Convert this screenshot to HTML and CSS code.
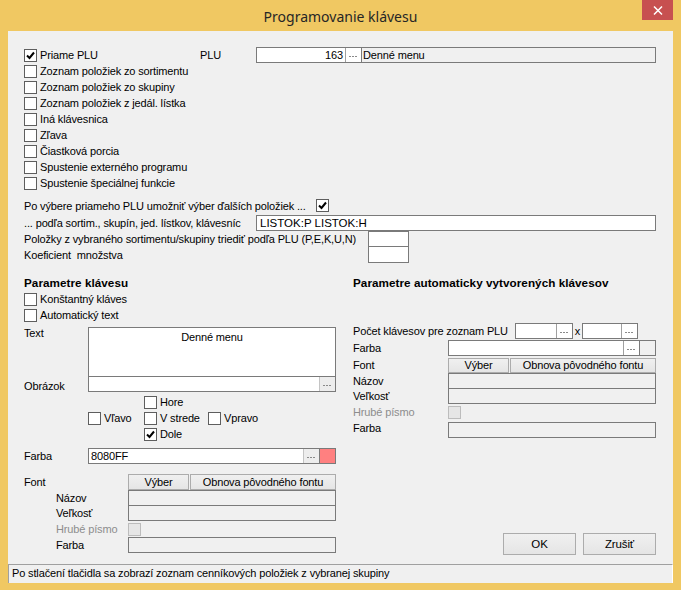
FILE: index.html
```html
<!DOCTYPE html>
<html lang="sk">
<head>
<meta charset="utf-8">
<title>Programovanie klávesu</title>
<link rel="stylesheet" href="styles.css">
</head>
<body>
<div class="window">
  <div class="titlebar">
    <span></span>
    <span class="title">Programovanie klávesu</span>
    <span class="close"><svg width="10" height="9" viewBox="0 0 10 9"><path d="M1 0.5 L9 8.5 M9 0.5 L1 8.5" stroke="#fff" stroke-width="1.5" fill="none"/></svg></span>
  </div>
  <div class="client">
    <div class="content">
      <section class="top">
        <div class="row">
          <label class="chk c-plu"><span class="cb"><svg class="tick" width="11" height="11" viewBox="0 0 11 11"><path d="M2 5.5 L4.5 8 L9 2.5" stroke="#000" stroke-width="2" fill="none"/></svg></span>Priame PLU</label>
          <span class="plu-lbl">PLU</span>
          <div class="field plu">
            <span class="plu-num">163</span><span class="dots white"><i></i></span><span class="plu-name">Denné menu</span>
          </div>
        </div>
        <div class="row"><label class="chk"><span class="cb"></span>Zoznam položiek zo sortimentu</label></div>
        <div class="row"><label class="chk"><span class="cb"></span>Zoznam položiek zo skupiny</label></div>
        <div class="row"><label class="chk"><span class="cb"></span>Zoznam položiek z jedál. lístka</label></div>
        <div class="row"><label class="chk"><span class="cb"></span>Iná klávesnica</label></div>
        <div class="row"><label class="chk"><span class="cb"></span>Zľava</label></div>
        <div class="row"><label class="chk"><span class="cb"></span>Čiastková porcia</label></div>
        <div class="row"><label class="chk"><span class="cb"></span>Spustenie externého programu</label></div>
        <div class="row"><label class="chk"><span class="cb"></span>Spustenie špeciálnej funkcie</label></div>
      </section>

      <section class="opts">
        <div class="row r17">
          <span class="lab292">Po výbere priameho PLU umožniť výber ďalších položiek ...</span>
          <span class="cb"><svg class="tick" width="11" height="11" viewBox="0 0 11 11"><path d="M2 5.5 L4.5 8 L9 2.5" stroke="#000" stroke-width="2" fill="none"/></svg></span>
        </div>
        <div class="row r17">
          <span class="lab232">... podľa sortim., skupín, jed. lístkov, klávesníc</span>
          <div class="field w400 listok"><span class="val">LISTOK:P LISTOK:H</span></div>
        </div>
        <div class="row">
          <span class="lab344">Položky z vybraného sortimentu/skupiny triediť podľa PLU (P,E,K,U,N)</span>
          <div class="field box41"></div>
        </div>
        <div class="row">
          <span class="lab344">Koeficient&nbsp; množstva</span>
          <div class="field box41 second"></div>
        </div>
      </section>

      <section class="lower">
        <div class="col left">
          <div class="row head">Parametre klávesu</div>
          <div class="row"><label class="chk"><span class="cb"></span>Konštantný kláves</label></div>
          <div class="row"><label class="chk"><span class="cb"></span>Automatický text</label></div>
          <div class="textrow">
            <span class="lab64 textlab">Text</span>
            <div class="field area">Denné menu</div>
          </div>
          <div class="row obr">
            <span class="lab64 obrlab">Obrázok</span>
            <div class="field w248"><span class="grow"></span><span class="dots"><i></i></span></div>
          </div>
          <div class="align">
            <span></span><label class="chk"><span class="cb"></span>Hore</label><span></span>
            <label class="chk"><span class="cb"></span>Vľavo</label>
            <label class="chk"><span class="cb"></span>V strede</label>
            <label class="chk"><span class="cb"></span>Vpravo</label>
            <span></span><label class="chk"><span class="cb"><svg class="tick" width="11" height="11" viewBox="0 0 11 11"><path d="M2 5.5 L4.5 8 L9 2.5" stroke="#000" stroke-width="2" fill="none"/></svg></span>Dole</label><span></span>
          </div>
          <div class="row lfarba">
            <span class="lab64">Farba</span>
            <div class="field w232"><span class="val grow">8080FF</span><span class="dots"><i></i></span></div>
            <span class="swatch red"></span>
          </div>
          <div class="row lfont">
            <span class="lab104">Font</span>
            <span class="btn vyber">Výber</span>
            <span class="btn obnova">Obnova pôvodného fontu</span>
          </div>
          <div class="row"><span class="sub">Názov</span><div class="field grey w208"></div></div>
          <div class="row m-1"><span class="sub">Veľkosť</span><div class="field grey w208"></div></div>
          <div class="row"><span class="sub dis">Hrubé písmo</span><span class="cb disabled"></span></div>
          <div class="row"><span class="sub">Farba</span><div class="field grey w208"></div></div>
        </div>

        <div class="col right">
          <div class="row head">Parametre automaticky vytvorených klávesov</div>
          <div class="row pocet">
            <span class="lab162">Počet klávesov pre zoznam PLU</span>
            <div class="field w58"><span class="grow"></span><span class="dots white"><i></i></span></div>
            <span class="xs">x</span>
            <div class="field w56"><span class="grow"></span><span class="dots white"><i></i></span></div>
          </div>
          <div class="row m1">
            <span class="lab95">Farba</span>
            <div class="field w192"><span class="grow"></span><span class="dots white"><i></i></span></div>
            <span class="swatch"></span>
          </div>
          <div class="row m1 rfont">
            <span class="lab95">Font</span>
            <span class="btn vyber">Výber</span>
            <span class="btn obnova">Obnova pôvodného fontu</span>
          </div>
          <div class="row"><span class="lab95">Názov</span><div class="field grey w208"></div></div>
          <div class="row m-1"><span class="lab95">Veľkosť</span><div class="field grey w208"></div></div>
          <div class="row"><span class="lab95 dis">Hrubé písmo</span><span class="cb disabled"></span></div>
          <div class="row rfarba"><span class="lab95">Farba</span><div class="field grey w208"></div></div>
          <div class="buttons">
            <span class="btn big">OK</span>
            <span class="btn big">Zrušiť</span>
          </div>
        </div>
      </section>
    </div>
    <div class="status">Po stlačení tlačidla sa zobrazí zoznam cenníkových položiek z vybranej skupiny</div>
  </div>
</div>
</body>
</html>
```

FILE: styles.css
```css
* { box-sizing: border-box; margin: 0; padding: 0; }

html, body { width: 681px; height: 590px; overflow: hidden; }

body {
  background: #F0C862;
  font-family: "Liberation Sans", Arial, sans-serif;
  font-size: 11px;
  letter-spacing: -0.14px;
  color: #000;
}

.window {
  width: 681px;
  height: 590px;
  display: flex;
  flex-direction: column;
  padding: 0 8px 7px 8px;
  background: #F0C862;
}

.titlebar {
  height: 31px;
  flex: none;
  display: grid;
  grid-template-columns: 1fr auto 1fr;
  align-items: start;
}

.title {
  font-family: "Noto Sans", "Open Sans", sans-serif;
  font-size: 14px;
  letter-spacing: 0;
  line-height: 31px;
  padding-top: 1px;
  color: #262626;
  white-space: nowrap;
}

.close {
  justify-self: end;
  width: 31px;
  height: 20px;
  background: #C75050;
  display: flex;
  align-items: center;
  justify-content: center;
}

.client {
  flex: 1;
  background: #F0F0F0;
  display: flex;
  flex-direction: column;
}

.content {
  flex: 1;
  padding: 16px 17px 0 16px;
}

.row {
  display: flex;
  align-items: center;
  height: 16px;
  white-space: nowrap;
  line-height: 16px;
}

.r17 { height: 17px; }

.chk {
  display: flex;
  align-items: center;
  gap: 3px;
  white-space: nowrap;
}

.cb {
  width: 13px;
  height: 13px;
  flex: none;
  border: 1px solid #5e5e5e;
  background: #fff;
  display: flex;
  align-items: center;
  justify-content: center;
}

.cb.disabled {
  background: #E6E6E6;
  border-color: #BCBCBC;
}

.tick { display: block; }

.c-plu { width: 176px; }
.plu-lbl { width: 56px; }

.field {
  display: flex;
  align-items: stretch;
  height: 16px;
  border: 1px solid #7A7A7A;
  background: #fff;
  flex: none;
  line-height: 14px;
  overflow: hidden;
}

.field.grey { background: #F0F0F0; }

.plu { width: 400px; }
.plu-num {
  width: 88px;
  text-align: right;
  padding-right: 2px;
}
.plu-name {
  flex: 1;
  background: #F0F0F0;
  border-left: 1px solid #7A7A7A;
  padding-left: 1px;
}

.dots {
  width: 16px;
  flex: none;
  background: #EDEDED;
  border-left: 1px solid #C4C4C4;
  display: flex;
  align-items: center;
  justify-content: center;
}
.dots.white { background: #fff; border-left-color: #A0A0A0; }
.dots i {
  display: block;
  width: 9px;
  height: 1px;
  margin-top: 3px;
  background: repeating-linear-gradient(90deg, #8A8A8A 0 2px, transparent 2px 3px);
}

.grow { flex: 1; }
.val { padding-left: 2px; }

/* options block */
.opts { margin-top: 6px; }
.lab292 { width: 292px; }
.lab232 { width: 232px; }
.lab344 { width: 344px; }
.w400 { width: 400px; }
.listok { align-self: flex-end; }
.listok .val { padding-left: 3px; font-size: 11.5px; letter-spacing: 0; }
.box41 { width: 41px; height: 17px; align-self: flex-start; }
.box41.second { margin-top: -1px; }

/* lower block */
.lower {
  margin-top: 12px;
  height: 280px;
  display: flex;
  gap: 17px;
}

.col { display: flex; flex-direction: column; }
.left { width: 312px; }
.right { width: 303px; }

.head { font-weight: bold; font-size: 11.7px; letter-spacing: 0.05px; }

.lab64 { width: 64px; flex: none; }
.lab104 { width: 104px; flex: none; }
.lab162 { width: 162px; flex: none; }
.lab95 { width: 95px; flex: none; }
.sub { width: 72px; margin-left: 32px; flex: none; }
.dis { color: #8D8D8D; }

.textrow {
  display: flex;
  align-items: flex-start;
  margin-top: 4px;
  height: 50px;
}
.textlab { margin-top: -2px; line-height: 16px; }
.area {
  width: 248px;
  height: 50px;
  justify-content: center;
  padding-top: 2px;
}

.obr { margin-top: -1px; }
.obrlab { padding-top: 3px; }
.w248 { width: 248px; }

.align {
  margin-top: 2px;
  display: grid;
  grid-template-columns: 56px 64px auto;
  grid-auto-rows: 16px;
  align-items: center;
  padding-left: 64px;
  white-space: nowrap;
}

.lfarba { margin-top: 6px; }
.w232 { width: 232px; }
.swatch {
  width: 16px;
  height: 16px;
  flex: none;
  border: 1px solid #7A7A7A;
  border-left: none;
  background: #F0F0F0;
}
.swatch.red { background: #FF8080; }

.lfont { margin-top: 10px; }

.btn {
  display: flex;
  align-items: center;
  justify-content: center;
  height: 16px;
  border: 1px solid #ACACAC;
  background: linear-gradient(#F0F0F0, #E5E5E5);
  flex: none;
  white-space: nowrap;
}
.vyber { width: 61px; }
.obnova { width: 146px; margin-left: 1px; }
.rfont .btn { height: 15px; }

.w208 { width: 208px; }
.m-1 { margin-top: -1px; }
.m1 { margin-top: 1px; }

.pocet { margin-top: 32px; }
.w58 { width: 58px; }
.w56 { width: 56px; }
.xs { width: 9px; text-align: center; flex: none; }
.w192 { width: 192px; }

.rfarba { align-items: flex-start; }
.rfarba .field { margin-top: 2px; }

.buttons {
  margin-top: auto;
  display: flex;
  justify-content: flex-end;
  gap: 7px;
}
.btn.big {
  width: 73px;
  height: 22px;
  font-size: 11.5px;
}

.status {
  height: 19px;
  flex: none;
  border-top: 1px solid #A0A0A0;
  border-left: 1px solid #A0A0A0;
  border-right: 1px solid #FFFFFF;
  line-height: 17px;
  padding-left: 3px;
  white-space: nowrap;
  overflow: hidden;
}
```
